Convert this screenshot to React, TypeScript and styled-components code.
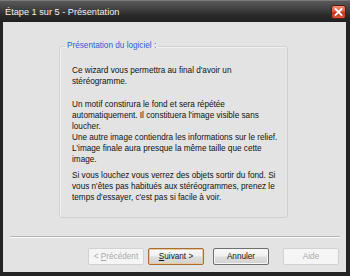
import React from "react";
import styled, { createGlobalStyle } from "styled-components";

const Global = createGlobalStyle`
  html, body { margin: 0; padding: 0; background: #fff; }
  #root { width: 350px; height: 276px; }
`;

const Window = styled.div`
  width: 350px;
  height: 276px;
  background: #242424;
  display: flex;
  flex-direction: column;
  box-sizing: border-box;
  font-family: "Liberation Sans", Arial, sans-serif;
`;

const TitleBar = styled.div`
  height: 22px;
  flex: none;
  display: flex;
  align-items: center;
  justify-content: space-between;
  padding: 0 4px 0 5px;
  background: linear-gradient(to bottom, #5c5c5c 0%, #3e3e3e 45%, #2a2a2a 70%, #1f1f1f 100%);
  box-shadow: inset 0 1px 0 #7a7a7a;
  box-sizing: border-box;
`;

const Title = styled.span`
  color: #f2f2f2;
  font-size: 9.2px;
  line-height: 12px;
  margin-top: 1px;
  white-space: nowrap;
`;

const CloseButton = styled.div`
  width: 15px;
  height: 14px;
  margin-top: 2px;
  box-sizing: border-box;
  border: 1px solid #5e1a10;
  border-radius: 3px;
  background: linear-gradient(to bottom, #ee8f78 0%, #df5c40 45%, #c6301a 55%, #d85a3a 100%);
  display: flex;
  align-items: center;
  justify-content: center;
`;

const Client = styled.div`
  flex: 1;
  margin: 0 4px 4px 3px;
  background: #e3e3e3;
  display: flex;
  flex-direction: column;
  padding-bottom: 7px;
  box-sizing: border-box;
`;

const Group = styled.fieldset`
  margin: 19px 0 0 56px;
  width: 229px;
  height: 177px;
  box-sizing: border-box;
  padding: 0;
  border: 1px solid #d0d0d0;
  border-radius: 3px;
  box-shadow: inset 1px 1px 0 #f2f2f2;
`;

const Legend = styled.legend`
  margin-left: 5px;
  padding: 0 2px;
  font-size: 8.2px;
  line-height: 10px;
  color: #2a5bd7;
`;

const Body = styled.div`
  padding: 14px 0 0 12px;
  font-size: 8.2px;
  line-height: 11px;
  color: #111;
  white-space: nowrap;
`;

const Para = styled.p<{ $gap: number }>`
  margin: 0 0 ${(p) => p.$gap}px 0;
`;

const Separator = styled.div`
  margin: 18px 6px 0 7px;
  height: 0;
  border-top: 1px solid #b4b4b4;
  border-bottom: 1px solid #fbfbfb;
`;

const ButtonRow = styled.div`
  margin-top: 10px;
  display: flex;
  justify-content: flex-end;
  padding-right: 7px;
`;

const Button = styled.div<{ $variant: "disabled" | "default" | "normal"; $gapLeft: number }>`
  width: 56px;
  height: 17px;
  margin-left: ${(p) => p.$gapLeft}px;
  box-sizing: border-box;
  border-radius: 2px;
  display: flex;
  align-items: center;
  justify-content: center;
  font-size: 8.2px;
  line-height: 10px;
  white-space: nowrap;
  color: ${(p) => (p.$variant === "disabled" ? "#a9a9a9" : "#111")};
  border: 1px solid
    ${(p) => (p.$variant === "disabled" ? "#d2d2d2" : p.$variant === "default" ? "#a86c34" : "#707070")};
  background: ${(p) =>
    p.$variant === "disabled"
      ? "#f5f5f5"
      : "linear-gradient(to bottom, #fbfbfb 0%, #efefef 45%, #dedede 55%, #d2d2d2 100%)"};
  box-shadow: ${(p) =>
    p.$variant === "default"
      ? "inset 0 0 0 1px #e9c9a0"
      : p.$variant === "normal"
      ? "inset 0 0 0 1px #f6f6f6"
      : "none"};
`;

const U = styled.span`
  text-decoration: underline;
`;

export default function App() {
  return (
    <>
      <Global />
      <Window>
        <TitleBar>
          <Title>Étape 1 sur 5 - Présentation</Title>
          <CloseButton>
            <svg width="9" height="8" viewBox="0 0 9 8">
              <path d="M1.5 1 L7.5 7 M7.5 1 L1.5 7" stroke="#fff" strokeWidth="1.8" strokeLinecap="square" />
            </svg>
          </CloseButton>
        </TitleBar>
        <Client>
          <Group>
            <Legend>Présentation du logiciel :</Legend>
            <Body>
              <Para $gap={12}>
                Ce wizard vous permettra au final d'avoir un
                <br />
                stéréogramme.
              </Para>
              <Para $gap={5}>
                Un motif constirura le fond et sera répétée
                <br />
                automatiquement. Il constituera l'image visible sans
                <br />
                loucher.
                <br />
                Une autre image contiendra les informations sur le relief.
                <br />
                L'image finale aura presque la même taille que cette
                <br />
                image.
              </Para>
              <Para $gap={0}>
                Si vous louchez vous verrez des objets sortir du fond. Si
                <br />
                vous n'êtes pas habitués aux stéréogrammes, prenez le
                <br />
                temps d'essayer, c'est pas si facile à voir.
              </Para>
            </Body>
          </Group>
          <Separator />
          <ButtonRow>
            <Button $variant="disabled" $gapLeft={0}>
              &lt;&nbsp;<U>P</U>récédent
            </Button>
            <Button $variant="default" $gapLeft={4}>
              <U>S</U>uivant &gt;
            </Button>
            <Button $variant="normal" $gapLeft={9}>
              Annuler
            </Button>
            <Button $variant="disabled" $gapLeft={14}>
              Aide
            </Button>
          </ButtonRow>
        </Client>
      </Window>
    </>
  );
}
